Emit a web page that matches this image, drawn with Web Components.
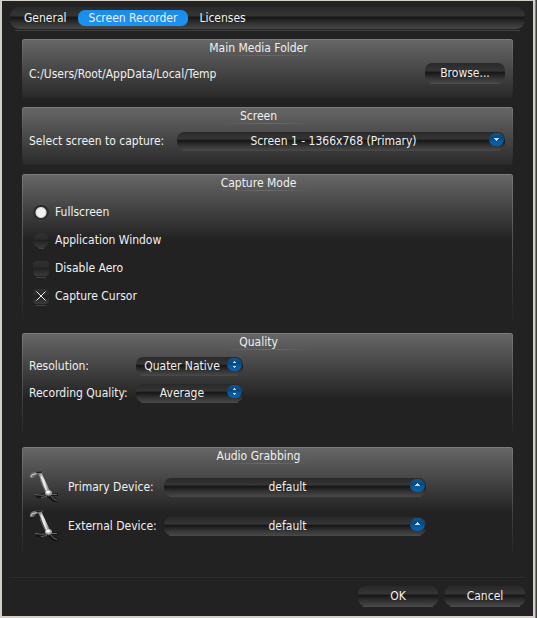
<!DOCTYPE html>
<html lang="en">
<head>
<meta charset="utf-8">
<title>Settings</title>
<style>
  body { margin: 0; background: #222; }
</style>
</head>
<body>
<settings-window></settings-window>
<script>
const BASE = `
  * { box-sizing: border-box; }
  button, select, input { font: inherit; color: inherit; margin: 0; }
  button, select { border: 0; cursor: pointer; }
  :focus-visible { outline: 1px solid #1a92f0; }
`;
const GLOSS = 'linear-gradient(#292929 0%, #353535 38%, #181818 47%, #1c1c1c 53%, #303030 72%, #464646 100%)';

function define(name, html, setup) {
  const template = document.createElement('template');
  template.innerHTML = html;
  customElements.define(name, class extends HTMLElement {
    constructor() {
      super();
      this.attachShadow({ mode: 'open' }).append(template.content.cloneNode(true));
    }
    connectedCallback() { if (setup) setup(this, this.shadowRoot); }
  });
}

define('gloss-button', `
  <style>${BASE}
    :host { display: block; width: 80px; padding-bottom: 1px; background: linear-gradient(#4c4c4c, #4c4c4c) center bottom / calc(100% - 10px) 1px no-repeat; }
    button { display: block; width: 100%; height: 20px; line-height: 20px; padding: 0; border-radius: 7px; background: ${GLOSS}; }
  </style>
  <button type="button"><slot></slot></button>
`);

define('tab-bar', `
  <style>${BASE}
    :host { display: block; padding-bottom: 2px; background: linear-gradient(#404040, #404040) center bottom / calc(100% - 10px) 1px no-repeat; }
    div { display: flex; height: 22px; align-items: center; padding: 0 3px; border-radius: 9px; background: ${GLOSS}; }
    button { height: 16px; line-height: 16px; padding: 0 11px; border-radius: 7px; background: none; }
    button[aria-selected="true"] { background: linear-gradient(#1a8cea, #1b93f2); box-shadow: 0 1px 0 #41464a; }
  </style>
  <div role="tablist">
    <button role="tab" aria-selected="false">General</button>
    <button role="tab" aria-selected="true">Screen Recorder</button>
    <button role="tab" aria-selected="false">Licenses</button>
  </div>
`, (host, root) => {
  const tabs = [...root.querySelectorAll('button')];
  tabs.forEach(t => t.onclick = () => tabs.forEach(o => o.setAttribute('aria-selected', o === t)));
});

define('group-panel', `
  <style>${BASE}
    :host { display: block; position: relative; border-radius: 3px 3px 0 0; padding: 1px 8px 14px 7px;
      background: linear-gradient(#676767, #222 66px); }
    :host::before { content: ""; position: absolute; inset: 0; border-radius: 3px 3px 0 0; pointer-events: none;
      background:
        linear-gradient(#7c7c7c, #7c7c7c) top / 100% 1px no-repeat,
        linear-gradient(#787878, #222) left / 1px 100% no-repeat,
        linear-gradient(#787878, #222) right / 1px 100% no-repeat; }
    h2 { margin: 0 0 7px; padding-right: 17px; font: inherit; line-height: 16px; text-align: center;
      background: radial-gradient(closest-side, #6c6c6c, transparent) 50% 100% / 90px 1px no-repeat; }
  </style>
  <h2></h2>
  <slot></slot>
`, (host, root) => { root.querySelector('h2').textContent = host.getAttribute('heading'); });

define('select-field', `
  <style>${BASE}
    :host { display: flex; align-items: center; }
    label { flex: none; width: var(--label-width); line-height: 18px; }
    .box { position: relative; flex: 0 1 var(--box-width, 100%); min-width: 0; height: 18px; border-radius: 7px; background: ${GLOSS}; }
    .box::after { content: ""; position: absolute; left: 5px; right: 5px; bottom: -1px; height: 1px; background: #484848; }
    select { display: block; appearance: none; width: 100%; height: 18px; line-height: 18px; padding: 0 15px 0 0; background: none; text-align: center; text-align-last: center; }
    option { background: #222; }
    svg { position: absolute; right: 1px; top: 1px; width: 15px; height: 14px; pointer-events: none; }
    .mark { display: none; fill: #b9dcf5; }
    :host([arrow="down"]) .down, :host([arrow="up"]) .up, :host([arrow="both"]) .both { display: block; }
  </style>
  <slot name="icon"></slot>
  <label for="s"></label>
  <div class="box">
    <select id="s"><option></option></select>
    <svg viewBox="0 0 15 14" aria-hidden="true">
      <defs><linearGradient id="g" x2="0" y2="1"><stop stop-color="#115790"/><stop offset=".48" stop-color="#064479"/><stop offset=".52" stop-color="#07569c"/><stop offset="1" stop-color="#0b62a9"/></linearGradient></defs>
      <rect y="0" width="15" height="13" rx="6.5" fill="url(#g)"/>
      <path class="mark down" d="M5 5h5v1H9v1H8v1H7V7H6V6H5z"/>
      <path class="mark up" d="M5 7h5V6H9V5H8V4H7v1H6v1H5z"/>
      <path class="mark both" d="M7 3h1v1h1v1H6V4h1zM6 8h3v1H8v1H7V9H6z"/>
    </svg>
  </div>
`, (host, root) => {
  root.querySelector('label').textContent = host.getAttribute('label');
  root.querySelector('option').textContent = host.getAttribute('value');
});

define('choice-field', `
  <style>${BASE}
    :host { display: block; }
    label { display: flex; align-items: center; height: 28px; padding-left: 4px; gap: 6px; }
    .mark { position: relative; display: grid; width: 16px; height: 15px; }
    .mark > * { grid-area: 1 / 1; }
    input { appearance: none; width: 16px; height: 15px; border-radius: 4px; background: linear-gradient(#303030, #2d2d2d 35%, #222 50%, #2a2a2a 65%, #3b3b3b); }
    .mark::after { content: ""; position: absolute; left: 3px; right: 3px; bottom: -2px; height: 1px; background: #424242; }
    input[type="radio"] { border-radius: 8px; }
    .mark:has([type="radio"])::after { left: 6px; right: 5px; bottom: -1px; }
    input[type="radio"]:checked { background: radial-gradient(circle, #f0f0f0 0 4px, #d8d8d8 5px, #2c2c2c 6px); }
    svg { display: none; width: 16px; height: 15px; pointer-events: none; stroke: #eee; fill: none; }
    input[type="checkbox"]:checked + svg { display: block; }
  </style>
  <label><span class="mark"><input><svg viewBox="0 0 16 15" aria-hidden="true"><path d="M3.500 2.500L12.500 11.500M12.500 2.500L3.500 11.500"/></svg></span><slot></slot></label>
`, (host, root) => {
  const input = root.querySelector('input');
  input.type = host.getAttribute('type');
  input.checked = host.hasAttribute('checked');
  if (input.type === 'radio') input.addEventListener('change', () => {
    host.parentNode.querySelectorAll('choice-field[type="radio"]').forEach(o => {
      if (o !== host) o.shadowRoot.querySelector('input').checked = false;
    });
  });
});

define('mic-icon', `
  <style>
    :host { display: block; flex: none; width: 39px; height: 32px; }
    svg { display: block; width: 32px; height: 32px; }
  </style>
  <svg viewBox="0 0 32 32" aria-hidden="true">
    <defs><linearGradient id="m"><stop stop-color="#777"/><stop offset=".5" stop-color="#e6e6e6"/><stop offset="1" stop-color="#777"/></linearGradient></defs>
    <path d="M19 21Q14 23 6 23L7 26Q10 28 12 27L18 26L21 28Q24 32 29 31L28 28Q25 28 23 25L29 25 29 22Q25 23 22 22Z" fill="#141414"/>
    <path d="M6 23.500Q13 25 18 23.500M12 26.500L18 25.500M22 25Q24 29 28 29.500M23 23.500L28 23.500" stroke="#6a6a6a" fill="none"/>
    <path d="M9 2L12 1 21 20 17 21Z" fill="url(#m)"/>
    <path d="M12 5L18 20" stroke="#f4f4f4"/>
    <path d="M11 9L16 20" stroke="#777" stroke-width=".7"/>
    <path d="M1 7Q0 2 5 1L13 0 14 2 7 4 4 7Z" fill="#707070"/>
    <path d="M2 6Q2 3 6 3L8 2.500" stroke="#ccc" fill="none"/>
    <path d="M7 1.500L13 1" stroke="#222" stroke-width="1.500"/>
    <ellipse cx="19.500" cy="22" rx="3.500" ry="3" fill="#aaa"/>
    <ellipse cx="19" cy="21" rx="2" ry="1.500" fill="#fff"/>
    <path d="M16 23.500Q20 26.500 23 23.500" stroke="#555" fill="none"/>
  </svg>
`);

define('settings-window', `
  <style>${BASE}
    :host { display: flex; flex-direction: column; box-sizing: border-box; min-height: 100vh; margin-right: 2px; padding: 6px 8px 9px;
      border: 2px solid #d4d0c8; border-top-width: 1px; box-shadow: 1px 0 #808080, 2px 0 #404040;
      background: #222; color: #f0f0f0; font: 12px "DejaVu Sans Condensed", "DejaVu Sans", sans-serif; }
    main { flex: 1; display: flex; flex-direction: column; gap: 9px; padding: 8px 12px 18px; }
    .row { display: flex; align-items: center; justify-content: space-between; line-height: 20px; }
    .stack { display: flex; flex-direction: column; gap: 9px; }
    .screen { --label-width: 148px; padding: 1px 0; }
    .quality { --label-width: 107px; --box-width: 107px; padding-bottom: 22px; }
    .audio { --label-width: 96px; --box-width: 262px; gap: 7px; }
    footer { display: flex; justify-content: flex-end; gap: 7px; padding-top: 8px; border-top: 1px solid #2e2e2e; box-shadow: inset 0 1px #1d1d1d; }
  </style>
  <tab-bar></tab-bar>
  <main>
    <group-panel heading="Main Media Folder">
      <div class="row"><span>C:/Users/Root/AppData/Local/Temp</span><gloss-button>Browse...</gloss-button></div>
    </group-panel>
    <group-panel heading="Screen">
      <div class="screen"><select-field label="Select screen to capture:" value="Screen 1 - 1366x768 (Primary)" arrow="down"></select-field></div>
    </group-panel>
    <group-panel heading="Capture Mode">
      <choice-field type="radio" checked>Fullscreen</choice-field>
      <choice-field type="radio">Application Window</choice-field>
      <choice-field type="checkbox">Disable Aero</choice-field>
      <choice-field type="checkbox" checked>Capture Cursor</choice-field>
    </group-panel>
    <group-panel heading="Quality">
      <div class="stack quality">
        <select-field label="Resolution:" value="Quater Native" arrow="both"></select-field>
        <select-field label="Recording Quality:" value="Average" arrow="both"></select-field>
      </div>
    </group-panel>
    <group-panel heading="Audio Grabbing">
      <div class="stack audio">
        <select-field label="Primary Device:" value="default" arrow="up"><mic-icon slot="icon"></mic-icon></select-field>
        <select-field label="External Device:" value="default" arrow="up"><mic-icon slot="icon"></mic-icon></select-field>
      </div>
    </group-panel>
  </main>
  <footer><gloss-button>OK</gloss-button><gloss-button>Cancel</gloss-button></footer>
`);
</script>
</body>
</html>
